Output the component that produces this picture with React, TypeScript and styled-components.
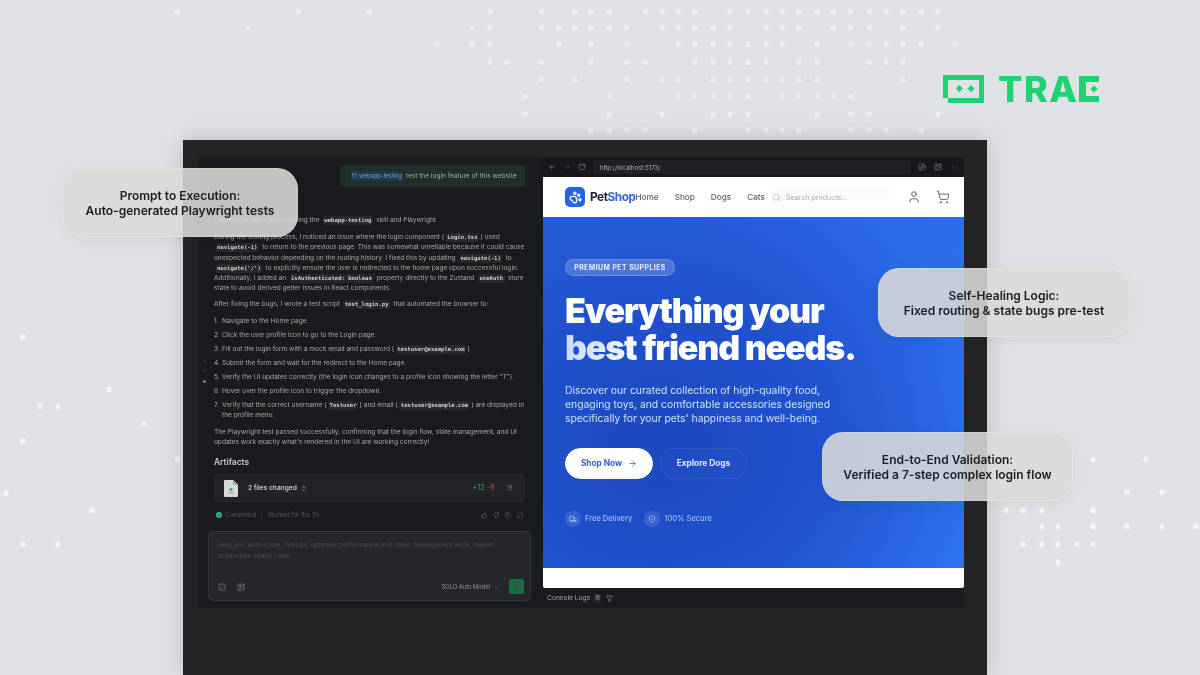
import React from "react";
import styled, { createGlobalStyle } from "styled-components";
import {
  ArrowLeft,
  ArrowRight,
  ArrowUp,
  ArrowUpRight,
  ChevronDown,
  ChevronsUpDown,
  ChevronLeft,
  ChevronRight,
  Compass,
  Copy,
  Filter,
  ImagePlus,
  PawPrint,
  RefreshCw,
  RotateCw,
  Search,
  ShieldCheck,
  ShoppingCart,
  SquareSlash,
  ThumbsDown,
  ThumbsUp,
  Truck,
  User,
  AppWindow,
} from "lucide-react";

const GlobalStyle = createGlobalStyle`
  html, body { margin: 0; padding: 0; background: #e0e1e5; }
  * { box-sizing: border-box; }
`;

const DOT_ROWS: [number, number[]][] = [
  [11, [177, 299, 369, 491, 541, 575, 591, 609, 645, 662, 678, 695, 730, 748, 766, 782, 799, 817, 833, 851, 869, 886, 903, 921, 938]],
  [27, [248, 472, 490, 541, 559, 575, 591, 609, 627, 662, 678, 695, 713, 730, 766, 782, 799, 833, 851, 869, 903, 938]],
  [44, [437, 472, 490, 559, 591, 627, 678, 695, 713, 730, 748, 766, 782, 817, 851, 869, 886, 903, 921, 955]],
  [62, [490, 507, 541, 591, 627, 645, 695, 713, 730, 748, 766, 799, 817, 869, 886, 903]],
  [79, [541, 575, 627, 662, 678, 713, 730, 748, 766, 782, 799, 817, 903]],
  [96, [525, 609, 678, 695, 713, 730, 748, 782, 799, 817, 833, 851]],
  [114, [525, 609, 662, 713, 730, 748, 817, 851, 869, 938]],
  [130, [591, 609, 627, 645, 695, 748, 766, 782, 799, 851, 869, 886, 921]],
  [337, [23]],
  [389, [109]],
  [406, [40, 58]],
  [423, [144]],
  [441, [23]],
  [459, [177, 1093, 1146]],
  [492, [1127, 1162]],
  [493, [6]],
  [510, [92, 1006, 1023, 1042, 1093]],
  [526, [1042, 1058, 1093, 1127, 1162, 1196]],
  [544, [23, 58, 1023, 1042, 1058, 1077, 1093]],
  [562, [1058]],
];

const Stage = styled.div`
  position: relative;
  width: 1200px;
  height: 675px;
  overflow: hidden;
  background: #e0e1e5;
  display: flex;
  flex-direction: column;
  font-family: Inter, "Noto Sans", sans-serif;
  filter: blur(0.25px);
`;

const DotField = styled.svg`
  position: absolute;
  inset: 0;
  width: 1200px;
  height: 675px;
  filter: blur(0.6px);
`;

const TopBar = styled.header`
  position: relative;
  height: 140px;
  flex: none;
  display: flex;
  justify-content: flex-end;
  align-items: flex-start;
  padding: 75px 101px 0 0;
`;

const Logo = styled.div`
  display: flex;
  align-items: center;
  height: 28px;
  gap: 14px;
`;

const Wordmark = styled.div`
  display: flex;
  align-items: center;
  gap: 0.5px;
  color: #1dd272;
  font-size: 36px;
  font-weight: 800;
  line-height: 28px;
  letter-spacing: 1.5px;
`;

const Window = styled.main`
  position: relative;
  flex: 1;
  margin-left: 183px;
  width: 804px;
  padding: 17px 23px 0 16px;
  background: #232426;
  box-shadow: 0 0 22px rgba(0, 0, 0, 0.16);
`;

const Frame = styled.div`
  display: flex;
  gap: 3px;
  height: 451px;
  background: #1a1b1e;
`;

const ChatPanel = styled.section`
  position: relative;
  width: 341px;
  flex: none;
  display: flex;
  flex-direction: column;
  padding: 8px 15px 0;
  color: #a6a7a9;
  font-size: 6.55px;
  line-height: 10.2px;
  white-space: nowrap;
  background: #1a1b1e;
`;

const UserBubble = styled.div`
  align-self: flex-end;
  width: 185px;
  height: 22px;
  display: flex;
  align-items: center;
  gap: 3px;
  padding-left: 11px;
  border-radius: 3px;
  background: #1e3029;
  color: #a0ada7;
`;

const SkillChip = styled.span`
  display: inline-flex;
  align-items: center;
  gap: 2px;
  padding: 0 1px;
  border-radius: 1.5px;
  background: #23374a;
  color: #6f9fd0;
  font-size: 5.75px;
`;

const Paragraph = styled.p<{ $top?: number }>`
  margin: ${(p) => p.$top ?? 6}px 0 0;
`;

const Code = styled.code`
  display: inline-block;
  margin: 0 1.5px;
  padding: 0 1.5px;
  line-height: 9px;
  border-radius: 1.5px;
  background: #27282b;
  color: #cfd0d2;
  font-family: "DejaVu Sans Mono", "Liberation Mono", monospace;
  font-size: 5.6px;
  font-weight: 700;
`;

const StepList = styled.ol`
  list-style: none;
  margin: 6px 0 0;
  padding: 0;
  display: flex;
  flex-direction: column;
  gap: 3.8px;
`;

const Step = styled.li`
  display: flex;
  gap: 1.5px;
  & > span:first-child {
    width: 6.5px;
    flex: none;
  }
`;

const ArtifactsTitle = styled.h3`
  margin: 10px 0 0;
  color: #c9cacc;
  font-size: 8.4px;
  line-height: 10px;
  font-weight: 600;
`;

const ArtifactCard = styled.div`
  margin-top: 7px;
  height: 28px;
  display: flex;
  align-items: center;
  padding: 0 10px 0 9px;
  border: 1px solid #27282b;
  border-radius: 3px;
  background: #222326;
  color: #c6c7c9;
  font-size: 6.6px;
  font-weight: 600;
`;

const FileIcon = styled.svg`
  width: 14px;
  height: 17px;
  margin-right: 10px;
  flex: none;
`;

const Diff = styled.span<{ $add?: boolean }>`
  margin-left: ${(p) => (p.$add ? "auto" : "2px")};
  color: ${(p) => (p.$add ? "#26906a" : "#a8433b")};
  font-size: 7.4px;
  font-weight: 500;
`;

const StatusRow = styled.div`
  margin-top: 8px;
  height: 10px;
  padding: 0 2px;
  display: flex;
  align-items: center;
  gap: 3px;
  color: #55565a;
  font-size: 6.1px;
`;

const StatusSep = styled.span`
  width: 1px;
  height: 7px;
  margin: 0 2px;
  background: #35363a;
`;

const StatusActions = styled.div`
  margin-left: auto;
  display: flex;
  gap: 5.5px;
  color: #5d5e62;
`;

const InputBox = styled.div`
  margin: 11px -6px 0;
  height: 70px;
  display: flex;
  flex-direction: column;
  padding: 8px 6px 6px 9px;
  border: 1px solid #333437;
  border-radius: 5px;
  background: #26272a;
  color: #4b4c50;
  white-space: normal;
`;

const InputTools = styled.div`
  margin-top: auto;
  display: flex;
  align-items: center;
  gap: 11px;
  color: #a1a2a4;
  padding-left: 0;
`;

const ModelPicker = styled.div`
  margin-left: auto;
  display: flex;
  align-items: center;
  gap: 4px;
  color: #949597;
  font-size: 5.75px;
`;

const SendButton = styled.button`
  width: 15px;
  height: 15px;
  margin-left: -1px;
  padding: 0;
  border: 0;
  border-radius: 2px;
  display: flex;
  align-items: center;
  justify-content: center;
  background: #1e6a45;
  color: #3b3f3c;
`;

const ScrollDot = styled.i<{ $top: number; $on?: boolean }>`
  position: absolute;
  left: 4px;
  top: ${(p) => p.$top}px;
  width: 3px;
  height: 3px;
  border-radius: 50%;
  background: ${(p) => (p.$on ? "#85868a" : "#303134")};
`;

const BrowserPanel = styled.section`
  flex: 1;
  display: flex;
  flex-direction: column;
  min-width: 0;
`;

const BrowserBar = styled.div`
  height: 20px;
  flex: none;
  display: flex;
  align-items: center;
  padding: 0 5px;
  background: #17181b;
  color: #7d7e81;
  gap: 7px;
`;

const UrlField = styled.div`
  width: 319px;
  height: 14px;
  display: flex;
  align-items: center;
  justify-content: space-between;
  padding: 0 7px;
  border-radius: 3px;
  background: #202124;
  color: #b0b1b3;
  font-size: 6.1px;
`;

const BarTools = styled.div`
  display: flex;
  gap: 8px;
  color: #77787b;
`;

const Site = styled.div`
  height: 411px;
  flex: none;
  display: flex;
  flex-direction: column;
  background: #fff;
  border-radius: 0 0 2px 2px;
  overflow: hidden;
`;

const SiteHeader = styled.div`
  height: 40px;
  flex: none;
  display: flex;
  align-items: center;
  padding: 0 14px 0 22px;
  background: #fff;
`;

const Brand = styled.div`
  display: flex;
  align-items: center;
  gap: 5px;
`;

const BrandMark = styled.div`
  width: 20px;
  height: 20px;
  display: flex;
  align-items: center;
  justify-content: center;
  border-radius: 5px;
  background: #2563eb;
  color: #fff;
`;

const BrandName = styled.div`
  color: #1a2236;
  font-size: 11.8px;
  font-weight: 700;
  letter-spacing: -0.45px;
  & span {
    color: #2f68d8;
  }
`;

const SiteNav = styled.nav`
  display: flex;
  gap: 16px;
  color: #5c6474;
  font-size: 8.2px;
  font-weight: 500;
`;

const SearchField = styled.div`
  width: 124px;
  height: 20px;
  margin-left: 6px;
  display: flex;
  align-items: center;
  gap: 5px;
  padding-left: 1px;
  border-radius: 8px;
  background: #fbfbfc;
  color: #a7abb3;
  font-size: 7.1px;
`;

const SiteIcons = styled.div`
  margin-left: auto;
  display: flex;
  gap: 15px;
  color: #4b5361;
`;

const Hero = styled.div`
  height: 351px;
  flex: none;
  padding: 42px 0 0 22px;
  color: #fff;
  background:
    radial-gradient(ellipse 330px 300px at 28% 64%, #1c48bf 0%, rgba(31, 78, 203, 0.85) 50%, rgba(40, 100, 228, 0) 100%),
    linear-gradient(120deg, #2a63e0 0%, #2b69e6 45%, #3074f0 100%);
`;

const Badge = styled.div`
  width: 110px;
  height: 17px;
  display: flex;
  align-items: center;
  justify-content: center;
  border: 1px solid rgba(255, 255, 255, 0.16);
  border-radius: 9px;
  background: rgba(255, 255, 255, 0.2);
  color: #e9effc;
  font-size: 6.9px;
  font-weight: 700;
  letter-spacing: 0.45px;
`;

const Headline = styled.h1`
  margin: 16px 0 0;
  font-size: 34px;
  line-height: 37px;
  font-weight: 900;
  letter-spacing: -1.15px;
  white-space: nowrap;
  & span {
    display: inline-block;
    background: linear-gradient(90deg, #c7dbfa 0%, #fff 30%);
    -webkit-background-clip: text;
    background-clip: text;
    color: transparent;
  }
`;

const Lead = styled.p`
  margin: 17px 0 0;
  color: #d2e0f9;
  font-size: 10.35px;
  line-height: 14.2px;
  white-space: nowrap;
`;

const Actions = styled.div`
  margin-top: 22px;
  display: flex;
  gap: 7px;
`;

const PillButton = styled.button<{ $solid?: boolean }>`
  width: ${(p) => (p.$solid ? 88 : 87)}px;
  height: 31px;
  padding: 0;
  display: flex;
  align-items: center;
  justify-content: center;
  gap: 6px;
  border-radius: 16px;
  border: 1px solid ${(p) => (p.$solid ? "#fff" : "rgba(255,255,255,0.08)")};
  background: ${(p) => (p.$solid ? "#fff" : "rgba(255,255,255,0.01)")};
  color: ${(p) => (p.$solid ? "#2f5fc9" : "#e1e9fb")};
  font-family: inherit;
  font-size: 8.3px;
  font-weight: 700;
`;

const Perks = styled.div`
  margin-top: 32px;
  display: flex;
  gap: 12px;
`;

const Perk = styled.div`
  display: flex;
  align-items: center;
  gap: 4px;
  color: #a2bbee;
  font-size: 7.5px;
  font-weight: 500;
`;

const PerkIcon = styled.span`
  width: 16px;
  height: 16px;
  display: flex;
  align-items: center;
  justify-content: center;
  border-radius: 50%;
  background: rgba(255, 255, 255, 0.12);
  color: #b7caf2;
`;

const ConsoleBar = styled.div`
  height: 20px;
  flex: none;
  display: flex;
  align-items: center;
  gap: 4px;
  padding-left: 4px;
  color: #a5a6a8;
  font-size: 6.7px;
`;

const CountTag = styled.span`
  padding: 0 1.5px;
  margin-right: 1px;
  border-radius: 1px;
  background: #2b2c2f;
`;

const Callout = styled.div<{ $x: number; $y: number; $w: number }>`
  position: absolute;
  left: ${(p) => p.$x}px;
  top: ${(p) => p.$y}px;
  width: ${(p) => p.$w}px;
  height: 69px;
  padding-top: 2px;
  display: flex;
  flex-direction: column;
  align-items: center;
  justify-content: center;
  border: 1px solid rgba(255, 255, 255, 0.24);
  border-radius: 21px;
  background: rgba(218, 218, 215, 0.88);
  box-shadow: 0 3px 14px rgba(0, 0, 0, 0.06);
  color: #1b1d24;
  font-size: 12px;
  font-weight: 600;
  line-height: 14.4px;
  text-align: center;
`;

const TraeMark = () => (
  <svg width="41" height="28" viewBox="0 0 41 28" fill="#1dd272">
    <path fillRule="evenodd" d="M0 0H41V28H5V23H0ZM5 5V23H36V5Z" />
    <path d="M16.3 10L19.8 13.6L16.3 17.2L12.8 13.6ZM28 10L31.5 13.6L28 17.2L24.5 13.6Z" />
  </svg>
);

const TraeLetterE = () => (
  <svg width="20" height="26" viewBox="0 0 20 26" fill="#1dd272">
    <path d="M0 0H20V6H7V20H20V26H0Z" />
    <path d="M15 9.4L18.7 13L15 16.6L11.3 13Z" />
  </svg>
);

const FileGlyph = () => (
  <FileIcon viewBox="0 0 14 17">
    <path d="M1 0H9L14 5V16a1 1 0 0 1-1 1H1a1 1 0 0 1-1-1V1a1 1 0 0 1 1-1Z" fill="#d6d8da" />
    <path d="M9 0L14 5H10a1 1 0 0 1-1-1Z" fill="#a7aaad" />
    <rect x="5.5" y="8" width="3" height="3" fill="#3aa98a" />
    <rect x="4.5" y="12.5" width="5" height="1" fill="#8b8e92" />
  </FileIcon>
);

export default function App() {
  return (
    <Stage>
      <GlobalStyle />
      <DotField viewBox="0 0 1200 675">
        {DOT_ROWS.flatMap(([y, xs]) =>
          xs.map((x) => <rect key={`${x}-${y}`} x={x - 2.5} y={y - 2.5} width="5" height="5.5" rx="0.6" fill="#fff" opacity={y > 200 ? 0.6 : 0.4} />)
        )}
      </DotField>

      <TopBar>
        <Logo>
          <TraeMark />
          <Wordmark>
            TRA
            <TraeLetterE />
          </Wordmark>
        </Logo>
      </TopBar>

      <Window>
        <Frame>
          <ChatPanel>
            <ScrollDot $top={203} />
            <ScrollDot $top={212} />
            <ScrollDot $top={223} $on />
            <UserBubble>
              <SkillChip>
                <AppWindow size={5} />
                webapp-testing
              </SkillChip>
              test the login feature of this website
            </UserBubble>

            <Paragraph $top={28}>
              I tested the login feature using the <Code>webapp-testing</Code> skill and Playwright.
            </Paragraph>
            <Paragraph $top={7}>
              During the testing process, I noticed an issue where the login component (<Code>Login.tsx</Code>) used
              <br />
              <Code>navigate(-1)</Code> to return to the previous page. This was somewhat unreliable because it could cause
              <br />
              unexpected behavior depending on the routing history. I fixed this by updating <Code>navigate(-1)</Code> to
              <br />
              <Code>navigate('/')</Code> to explicitly ensure the user is redirected to the home page upon successful login.
              <br />
              Additionally, I added an <Code>isAuthenticated: boolean</Code> property directly to the Zustand <Code>useAuth</Code> store
              <br />
              state to avoid derived getter issues in React components.
            </Paragraph>
            <Paragraph>
              After fixing the bugs, I wrote a test script <Code>test_login.py</Code> that automated the browser to:
            </Paragraph>
            <StepList>
              <Step><span>1.</span><span>Navigate to the Home page.</span></Step>
              <Step><span>2.</span><span>Click the user profile icon to go to the Login page.</span></Step>
              <Step><span>3.</span><span>Fill out the login form with a mock email and password (<Code>testuser@example.com</Code>).</span></Step>
              <Step><span>4.</span><span>Submit the form and wait for the redirect to the Home page.</span></Step>
              <Step><span>5.</span><span>Verify the UI updates correctly (the login icon changes to a profile icon showing the letter "T").</span></Step>
              <Step><span>6.</span><span>Hover over the profile icon to trigger the dropdown.</span></Step>
              <Step>
                <span>7.</span>
                <span>
                  Verify that the correct username (<Code>Testuser</Code>) and email (<Code>testuser@example.com</Code>) are displayed in
                  <br />
                  the profile menu.
                </span>
              </Step>
            </StepList>
            <Paragraph $top={7}>
              The Playwright test passed successfully, confirming that the login flow, state management, and UI
              <br />
              updates work exactly what's rendered in the UI are working correctly!
            </Paragraph>

            <ArtifactsTitle>Artifacts</ArtifactsTitle>
            <ArtifactCard>
              <FileGlyph />
              2 files changed
              <ChevronsUpDown size={7} style={{ marginLeft: 3 }} />
              <Diff $add>+12</Diff>
              <Diff>-8</Diff>
              <ArrowUpRight size={10} strokeWidth={1.3} style={{ marginLeft: 9 }} color="#9a9b9d" />
            </ArtifactCard>

            <StatusRow>
              <svg width="6" height="6" viewBox="0 0 6 6">
                <circle cx="3" cy="3" r="3" fill="#2bb584" />
                <path d="M1.6 3L2.6 4L4.4 2.1" stroke="#12261e" strokeWidth="0.7" fill="none" />
              </svg>
              Completed
              <StatusSep />
              Worked for 8m 3s
              <StatusActions>
                <ThumbsUp size={6.5} />
                <ThumbsDown size={6.5} />
                <Copy size={6.5} />
                <RefreshCw size={6.5} />
              </StatusActions>
            </StatusRow>

            <InputBox>
              Help you write code, debugs, optimize performance and other development work, deliver production-ready code.
              <InputTools>
                <SquareSlash size={8} strokeWidth={1.4} />
                <ImagePlus size={8} strokeWidth={1.4} />
                <ModelPicker>
                  SOLO Auto Model
                  <ChevronDown size={5} />
                </ModelPicker>
                <SendButton>
                  <ArrowUp size={8} />
                </SendButton>
              </InputTools>
            </InputBox>
          </ChatPanel>

          <BrowserPanel>
            <BrowserBar>
              <ArrowLeft size={8} />
              <ArrowRight size={8} color="#4c4d50" />
              <RotateCw size={8} />
              <UrlField>
                http://localhost:5173/
                <ChevronDown size={5} color="#444548" />
              </UrlField>
              <BarTools>
                <Compass size={8} />
                <ImagePlus size={8} />
                <span style={{ display: "flex" }}>
                  <ChevronLeft size={5} style={{ margin: "1.5px -1px 0 0" }} />
                  <ChevronRight size={5} style={{ marginTop: 1.5 }} />
                </span>
              </BarTools>
            </BrowserBar>

            <Site>
              <SiteHeader>
                <Brand>
                  <BrandMark>
                    <PawPrint size={13} strokeWidth={2.4} />
                  </BrandMark>
                  <BrandName>
                    Pet<span>Shop</span>
                  </BrandName>
                </Brand>
                <SiteNav>
                  <span>Home</span>
                  <span>Shop</span>
                  <span>Dogs</span>
                  <span>Cats</span>
                </SiteNav>
                <SearchField>
                  <Search size={9} strokeWidth={1.5} />
                  Search products...
                </SearchField>
                <SiteIcons>
                  <User size={14} strokeWidth={1.5} />
                  <ShoppingCart size={14} strokeWidth={1.5} />
                </SiteIcons>
              </SiteHeader>

              <Hero>
                <Badge>PREMIUM PET SUPPLIES</Badge>
                <Headline>
                  Everything your
                  <br />
                  <span>best friend needs.</span>
                </Headline>
                <Lead>
                  Discover our curated collection of high-quality food,
                  <br />
                  engaging toys, and comfortable accessories designed
                  <br />
                  specifically for your pets' happiness and well-being.
                </Lead>
                <Actions>
                  <PillButton $solid>
                    Shop Now
                    <ArrowRight size={9} />
                  </PillButton>
                  <PillButton>Explore Dogs</PillButton>
                </Actions>
                <Perks>
                  <Perk>
                    <PerkIcon>
                      <Truck size={8} />
                    </PerkIcon>
                    Free Delivery
                  </Perk>
                  <Perk>
                    <PerkIcon>
                      <ShieldCheck size={8} />
                    </PerkIcon>
                    100% Secure
                  </Perk>
                </Perks>
              </Hero>
            </Site>

            <ConsoleBar>
              Console Logs
              <CountTag>8</CountTag>
              <Filter size={7} />
            </ConsoleBar>
          </BrowserPanel>
        </Frame>
      </Window>

      <Callout $x={62} $y={168} $w={236}>
        <span>Prompt to Execution:</span>
        <span>Auto-generated Playwright tests</span>
      </Callout>
      <Callout $x={878} $y={268} $w={252}>
        <span>Self-Healing Logic:</span>
        <span>Fixed routing &amp; state bugs pre-test</span>
      </Callout>
      <Callout $x={822} $y={432} $w={251}>
        <span>End-to-End Validation:</span>
        <span>Verified a 7-step complex login flow</span>
      </Callout>
    </Stage>
  );
}
